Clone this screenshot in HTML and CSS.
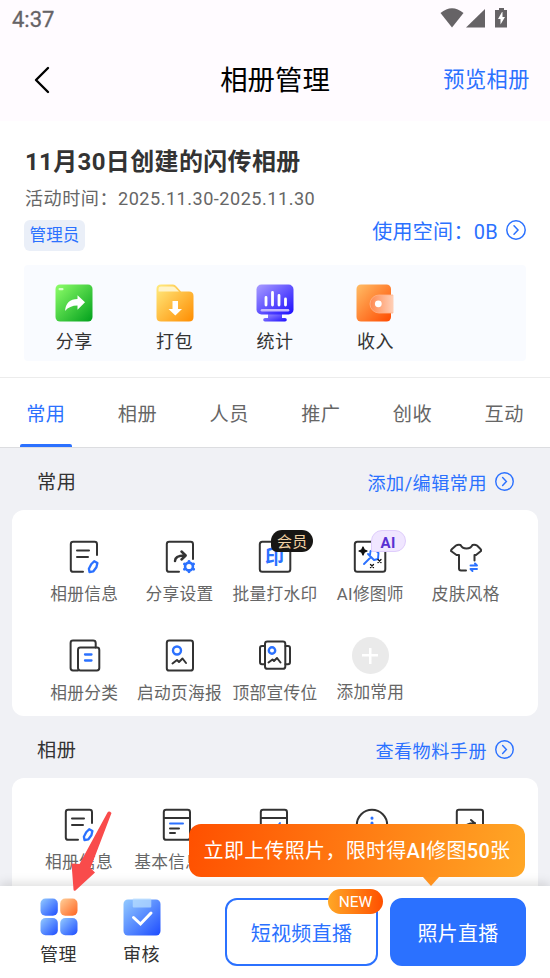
FILE: index.html
```html
<!DOCTYPE html>
<html lang="zh-CN">
<head>
<meta charset="utf-8">
<title>相册管理</title>
<link rel="stylesheet" href="styles.css">
</head>
<body>
<svg class="defs" width="0" height="0" aria-hidden="true">
  <defs>
    <linearGradient id="green" x1="0" y1="0" x2="1" y2="1"><stop offset="0" stop-color="#8fff69"/><stop offset="1" stop-color="#00a01c"/></linearGradient>
    <linearGradient id="yellow" x1="0" y1="0" x2="1" y2="1"><stop offset="0" stop-color="#ffec80"/><stop offset="1" stop-color="#ff8c00"/></linearGradient>
    <linearGradient id="violet" x1="0" y1="0" x2="1" y2="1"><stop offset="0" stop-color="#aa9dff"/><stop offset="1" stop-color="#1c0dff"/></linearGradient>
    <linearGradient id="orange" x1="0" y1="0" x2="1" y2="1"><stop offset="0" stop-color="#ffbd66"/><stop offset="1" stop-color="#ff4a00"/></linearGradient>
    <linearGradient id="peach" x1="0" y1="0" x2="1" y2="1"><stop offset="0" stop-color="#ffd09a"/><stop offset="1" stop-color="#ff6420"/></linearGradient>
    <linearGradient id="blue" x1="0" y1="0" x2="1" y2="1"><stop offset="0" stop-color="#94cbff"/><stop offset="1" stop-color="#1d4cff"/></linearGradient>
    <linearGradient id="clasp" x1="0" y1="0" x2="1" y2="0"><stop offset="0" stop-color="#ff8a50"/><stop offset="1" stop-color="#ffd0b8"/></linearGradient>
    <symbol id="chev" viewBox="0 0 20 20"><circle cx="10" cy="10" r="9.2"/><path d="M8 5.8 12 10 8 14.2"/></symbol>
    <symbol id="doc" viewBox="0 0 38 38">
      <path d="M32 17V6.2q0-2.4-2.4-2.4H8.2q-2.4 0-2.4 2.4v25.2q0 2.4 2.4 2.4H18M12 12.500h12M12 19h11"/>
      <path class="b" d="m29.200 23.200 3.200 1.800-1 4.300-3 4-3.900.8-.6-3.400 2.300-4.500z" stroke-width="2.300"/>
    </symbol>
  </defs>
</svg>

<div class="screen">
  <header class="top">
    <div class="status">
      <span class="time">4:37</span>
      <svg class="signals" width="70" height="22" viewBox="0 0 70 22" fill="#666366">
        <path d="M.5 6Q12-3.500 23.500 6L12 20.500z"/><path d="M26 20.500 45 2v18.500z"/>
        <path d="M59 1h5v2h3v17.500H55V3h4z"/><path d="m62 5-4 7h2.500v5.500L65 10h-2.500V5z" fill="#fff"/>
      </svg>
    </div>
    <div class="navbar">
      <svg class="back" width="18" height="30" viewBox="0 0 18 30"><path d="M15 3 3 15l12 12"/></svg>
      <h1>相册管理</h1>
      <a class="preview">预览相册</a>
    </div>
  </header>

  <section class="summary">
    <h2>11月30日创建的闪传相册</h2>
    <p class="date">活动时间：2025.11.30-2025.11.30</p>
    <div class="meta">
      <span class="role">管理员</span>
      <a class="space">使用空间：0B <svg width="20" height="20"><use href="#chev"/></svg></a>
    </div>
    <div class="quick">
      <div class="quick-item">
        <svg width="38" height="38" viewBox="0 0 38 38"><rect x=".5" y=".5" width="37" height="37" rx="4.500" fill="url(#green)"/><rect x="3.500" y="4" width="5" height="2.300" rx="1.100" fill="#d6ffc9"/><path d="M10 27q1-12 12.500-12v-3.700l7.500 7-7.500 7.500V21.500q-8 0-12.500 5.500z" fill="#fff"/></svg>
        <span>分享</span>
      </div>
      <div class="quick-item">
        <svg width="38" height="38" viewBox="0 0 38 38"><path d="M.5 5q0-4.500 4.500-4.500h12q2 0 3.500 2l4.500 5h8q4.500 0 4.500 4.500v21q0 4.500-4.500 4.500H5q-4.500 0-4.500-4.500z" fill="url(#yellow)"/><path d="M2.500 7.500V4.800Q2.500 2.500 5 2.500h11.500q1.500 0 2.500 1l4 4z" fill="#fff3c8"/><path d="M16.500 17h5.500v8h4l-6.700 6.500L12.500 25h4z" fill="#fff"/></svg>
        <span>打包</span>
      </div>
      <div class="quick-item">
        <svg width="38" height="38" viewBox="0 0 38 38"><path d="M12 29h14v5h3a1.800 1.800 0 0 1 0 3.600H9A1.800 1.800 0 0 1 9 34h3z" fill="url(#violet)"/><rect x=".5" y=".5" width="37" height="30" rx="5" fill="url(#violet)"/><path d="M10 13.500v7.500M16.500 8.500V21M23 11.500V21M29.500 15v6" stroke="#fff" stroke-width="2.800" stroke-linecap="round"/><path d="M6 26.300h26" stroke="#c4b8ff" stroke-width="2.600" stroke-linecap="round"/></svg>
        <span>统计</span>
      </div>
      <div class="quick-item">
        <svg width="38" height="38" viewBox="0 0 38 38"><rect x=".5" y=".5" width="34.500" height="37" rx="4.500" fill="url(#orange)"/><path d="M37.500 11H23a8.800 8.800 0 0 0 0 18h14.500z" fill="url(#clasp)"/><path d="M37 11H23a8.800 8.800 0 0 0 0 18h14" fill="none" stroke="#ffb48a" stroke-width=".8"/><circle cx="22.300" cy="19.800" r="3.400" fill="#fff"/></svg>
        <span>收入</span>
      </div>
    </div>
  </section>

  <nav class="tabs">
    <a class="tab active">常用</a><a class="tab">相册</a><a class="tab">人员</a><a class="tab">推广</a><a class="tab">创收</a><a class="tab">互动</a>
  </nav>

  <main class="content">
    <div class="section-head"><h3>常用</h3><a>添加/编辑常用<svg width="19" height="19"><use href="#chev"/></svg></a></div>
    <div class="card common">
      <div class="item"><svg class="ic" viewBox="0 0 38 38"><use href="#doc"/></svg><span>相册信息</span></div>
      <div class="item">
        <svg class="ic" viewBox="0 0 38 38"><path d="M32 21V6.200q0-2.400-2.400-2.400H8.200q-2.400 0-2.400 2.400v25.200q0 2.400 2.400 2.400H18"/><path d="M14 23q0-5.500 9.500-5.500M20.500 13.500l4.200 4-4.200 4" stroke-width="2.500"/><circle class="b" cx="28" cy="28.500" r="3.900" stroke-width="2.600"/><path class="b" d="M28 23.300v.3M28 33.500v.3M23.400 26l.3.200M32.400 31l.3.200M32.600 26l-.3.200M23.700 31l-.3.200" stroke-width="2.800"/></svg>
        <span>分享设置</span>
      </div>
      <div class="item">
        <svg class="ic" viewBox="0 0 38 38"><rect x="3.800" y="3.800" width="30.500" height="30" rx="2.500"/><text class="seal" x="18.500" y="25.500" text-anchor="middle">印</text></svg>
        <b class="badge vip">会员</b><span>批量打水印</span>
      </div>
      <div class="item">
        <svg class="ic" viewBox="0 0 38 38"><rect x="3.800" y="3.800" width="30.500" height="30" rx="2.500"/><path class="b" d="m13 26 6.500-6.500M17 16l6 6 4-1 .500-6-4-4-4 2-.5 4" stroke-width="1.900"/><path class="k" d="m12 9 1.200 2.800L16 13l-2.800 1.200L12 17l-1.200-2.800L8 13l2.800-1.200zM27 21.500l3 3m0-3-3 3M19.500 26.500l3 3m0-3-3 3"/></svg>
        <b class="badge ai">AI</b><span>AI修图师</span>
      </div>
      <div class="item">
        <svg class="ic" viewBox="0 0 38 38"><path d="M19 32.500h-5q-2 0-2-2V17H9.500L4 13q0-1 1-2l4-3.500q1.500-1 4.500-.6 1.500 3.600 6 3.600t6-3.600q3-.4 4.500.6l3.500 3.500q1 1 .500 2L29 17h-1.500v5.500"/><path class="b" d="M23.500 27.500H30l-2-2M30 31h-6.500l2 2" stroke-width="1.900"/></svg>
        <span>皮肤风格</span>
      </div>
      <div class="item">
        <svg class="ic" viewBox="0 0 38 38"><path d="M13 33.500H8q-2.400 0-2.400-2.400V6q0-2.400 2.400-2.400h20Q30.700 3.600 30.700 6v4.500"/><rect x="13" y="10.500" width="21.300" height="23" rx="2.400"/><path class="b" d="M20 17.500h6.500M20 23.500h6.500" stroke-width="2.300"/></svg>
        <span>相册分类</span>
      </div>
      <div class="item">
        <svg class="ic" viewBox="0 0 38 38"><rect x="5.800" y="3.600" width="26.200" height="30" rx="2.400"/><circle class="b" cx="16" cy="13.500" r="4" stroke-width="2.400"/><path d="m11.500 26.500 4.500-3.500 2 2 3.500-3.500 3.500 4.500"/></svg>
        <span>启动页海报</span>
      </div>
      <div class="item">
        <svg class="ic" viewBox="0 0 38 38"><rect x="9" y="4.500" width="20.300" height="27.300" rx="2.400"/><path d="M8.500 9H6Q4 9 4 11v14q0 2.300 2 2.300h2.500M29.500 9H32q2 0 2 2v14q0 2.300-2 2.300h-2.500"/><circle class="b" cx="16" cy="13.500" r="3.200" stroke-width="2.400"/><path d="m12.500 25.500 4-3 1.500 1.500 3-3 3.500 4.500"/></svg>
        <span>顶部宣传位</span>
      </div>
      <div class="item add"><i class="plus"></i><span>添加常用</span></div>
    </div>

    <div class="section-head second"><h3>相册</h3><a>查看物料手册<svg width="19" height="19"><use href="#chev"/></svg></a></div>
    <div class="card album">
      <div class="item"><svg class="ic" viewBox="0 0 38 38"><use href="#doc"/></svg><span>相册信息</span></div>
      <div class="item"><svg class="ic" viewBox="0 0 38 38"><rect x="5.800" y="3.800" width="26.200" height="30" rx="2.400"/><path d="M6 12h26M12 22.500h9M12 27h5"/><path class="b" d="M12 17.500h13"/></svg><span>基本信息页</span></div>
      <div class="item"><svg class="ic" viewBox="0 0 38 38"><rect x="5.800" y="3.800" width="26.200" height="30" rx="2.400"/><path d="M6 12h26"/><path class="b" d="m13 24 5 3 7-10"/></svg></div>
      <div class="item"><svg class="ic" viewBox="0 0 38 38"><circle cx="19" cy="19" r="15.200"/><path class="b" d="M19 12v.2M19 17v9" stroke-width="3"/></svg></div>
      <div class="item"><svg class="ic" viewBox="0 0 38 38"><rect x="5.800" y="3.800" width="26.200" height="30" rx="2"/><path d="M14 23q0-6 10-6M20 14l4 3.500-4 4"/></svg></div>
    </div>
  </main>

  <footer class="bottom">
    <div class="dock">
      <svg width="38" height="38" viewBox="0 0 38 38"><rect x=".5" y=".5" width="17.300" height="17.300" rx="5" fill="url(#blue)"/><rect x="20.200" y=".5" width="17.300" height="17.300" rx="5" fill="url(#peach)"/><rect x=".5" y="20" width="17.300" height="17.300" rx="5" fill="url(#blue)"/><rect x="20.200" y="20" width="17.300" height="17.300" rx="5" fill="url(#blue)"/></svg>
      <span>管理</span>
    </div>
    <div class="dock">
      <svg width="38" height="38" viewBox="0 0 38 38"><rect x=".5" y="1.500" width="37" height="36" rx="4.500" fill="url(#blue)"/><rect x="9.700" y=".5" width="18.600" height="9" rx="1" fill="#b7dcff" opacity=".75"/><path d="m10.500 19.500 7 6.500 10.500-11" fill="none" stroke="#fff" stroke-width="3" stroke-linecap="round"/></svg>
      <span>审核</span>
    </div>
    <button class="btn outline">短视频直播<b class="new">NEW</b></button>
    <button class="btn solid">照片直播</button>
    <div class="tip">立即上传照片，限时得<em>AI</em>修图<em>50</em>张</div>
  </footer>

  <svg class="pointer" width="42" height="82" viewBox="70 810 42 82"><path d="M107.500 812.500q1.500-2 4 .5L90.500 868l4.500 4.500-19.500 18q-1.800 1-2-1L71.500 863.500l8 .5z" fill="#f94b4b"/></svg>
</div>
</body>
</html>
```

FILE: styles.css
```css
* { box-sizing: border-box; }
body { margin: 0; font-family: Roboto, "Noto Sans CJK SC", sans-serif; letter-spacing: .5px; color: #333; }
h1, h2, h3, p { margin: 0; font-weight: 400; }
.defs { position: absolute; }
.screen { position: relative; width: 550px; height: 978px; overflow: hidden; display: flex; flex-direction: column; background: #fff; }

.top { height: 121px; flex: none; background: #fffbff; }
.status { height: 38px; display: flex; justify-content: space-between; padding: 7px 40px 0 12px; }
.time { font-size: 22px; line-height: 25px; font-weight: 400; -webkit-text-stroke: .3px #666366; color: #666366; letter-spacing: 0; }
.navbar { height: 83px; display: grid; grid-template-columns: 1fr auto 1fr; align-items: center; padding: 0 20px 0 33px; }
.back { fill: none; stroke: #000; stroke-width: 2.4; stroke-linecap: round; stroke-linejoin: round; }
.navbar h1 { font-size: 27.400px; letter-spacing: 0; color: #000; margin: -4px 0 0 -13px; }
.preview { justify-self: end; margin-top: -4px; font-size: 21.200px; color: #2b71ff; }

.summary { height: 256px; flex: none; padding: 25px 24px 0 24px; }
.summary h2 { font-size: 24px; line-height: 32px; font-weight: 700; letter-spacing: .35px; padding-left: 1px; }
.date { font-size: 18.100px; line-height: 24px; margin-top: 9px; color: #666; padding-left: 1px; }
.meta { display: flex; justify-content: space-between; margin-top: 9px; height: 31px; }
.role { width: 61px; height: 31px; border-radius: 6px; background: #eaeff8; color: #2b71ff; font-size: 16.500px; line-height: 31px; text-align: center; letter-spacing: .2px; }
.space { display: flex; align-items: center; height: 20px; gap: 8px; font-size: 20px; letter-spacing: .3px; color: #2b71ff; }
.space svg, .section-head svg { fill: none; stroke: #2b71ff; stroke-width: 1.500; stroke-linecap: round; }
.quick { display: grid; grid-template-columns: repeat(5, 1fr); height: 96px; margin-top: 14px; padding-top: 19px; background: #f9fbff; border-radius: 4px; }
.quick-item { display: flex; flex-direction: column; align-items: center; font-size: 18px; }
.quick-item span { line-height: 24px; margin-top: 8px; }

.tabs { height: 71px; flex: none; display: flex; border-top: 1px solid #ececec; border-bottom: 1px solid #dcdde0; }
.tab { flex: 1; text-align: center; font-size: 19.200px; line-height: 74px; color: #666; position: relative; }
.active { color: #2b71ff; }
.active::after { content: ""; position: absolute; left: 20px; top: 66px; width: 52px; height: 3px; background: #2b71ff; border-radius: 2px 2px 0 0; }

.content { flex: 1; min-height: 0; background: #f0f1f5; padding: 0 12px; }
.section-head { height: 62px; display: flex; justify-content: space-between; align-items: center; padding: 5px 24px 0 25px; }
.section-head.second { padding-top: 5px; }
.section-head h3 { font-size: 19.200px; margin-top: -1px; }
.section-head a { display: flex; align-items: center; gap: 8px; color: #2b71ff; font-size: 18.100px; }
.card { background: #fff; border-radius: 12px; display: grid; }
.common { height: 206px; grid-template-columns: repeat(5, 95.400px); grid-auto-rows: 99px; padding: 28px 0 0 24.500px; }
.album { height: 220px; grid-template-columns: repeat(5, 97.800px); padding: 28px 0 0 18px; }
.item { display: flex; flex-direction: column; align-items: center; position: relative; color: #666; font-size: 16.700px; letter-spacing: .3px; white-space: nowrap; }
.item > span { line-height: 22px; margin-top: 8px; }
.ic { width: 38px; height: 38px; fill: none; stroke: #333; stroke-width: 2; stroke-linejoin: round; stroke-linecap: round; }
.ic .b, .b { stroke: #2b71ff; }
.ic .k { fill: #111; stroke: #111; stroke-width: 1.300; }
.ic .seal { fill: #2b71ff; stroke: none; font-size: 19px; font-weight: 700; letter-spacing: 0; }
.badge { position: absolute; top: -8px; height: 22px; line-height: 24px; text-align: center; letter-spacing: .2px; }
.vip { left: 44px; width: 42px; background: #171614; color: #f1d1a4; border-radius: 11px 11px 11px 6px; font-size: 15px; font-weight: 400; }
.ai { left: 48px; width: 35px; background: #f0e6ff; border: 1px solid #dfcdfc; color: #5930d2; border-radius: 11px 11px 11px 2px; font-size: 15px; font-weight: 700; letter-spacing: .5px; }
.plus { width: 37px; height: 37px; border-radius: 50%; background: linear-gradient(#fff, #fff) center / 16px 2.500px no-repeat, linear-gradient(#fff, #fff) center / 2.500px 16px no-repeat, #eaeaea; }

.bottom { position: relative; height: 92px; flex: none; display: flex; padding: 12px 24px 0 17px; background: #fff; box-shadow: 0 -3px 10px rgba(0, 0, 0, .13); }
.dock { width: 83px; display: flex; flex-direction: column; align-items: center; font-size: 18px; }
.dock span { line-height: 24px; margin-top: 7px; }
.dock svg { margin-top: -.5px; }
.btn { position: relative; height: 68px; font: 20px/65px Roboto, "Noto Sans CJK SC", sans-serif; letter-spacing: .3px; border: 2px solid #2b71ff; border-radius: 12px; padding: 2px 0 0; text-align: center; }
.outline { width: 153px; margin-left: 42px; color: #2b71ff; background: #fff; }
.solid { width: 136px; margin-left: 12px; flex: none; color: #fff; background: #2b71ff; }
.new { position: absolute; top: -11px; right: -7px; width: 55px; height: 25px; border-radius: 13px; background: linear-gradient(90deg, #ffa726, #ff5000); color: #fff; font-size: 15.500px; font-weight: 400; line-height: 27px; letter-spacing: 0; }
.tip { position: absolute; right: 25px; top: -62px; width: 336px; height: 53px; border-radius: 12px; background: linear-gradient(100deg, #ff5000, #ffa726); color: #fff; font-size: 20px; line-height: 55px; text-align: center; white-space: nowrap; letter-spacing: .3px; }
.tip em { font-style: normal; font-weight: 500; }
.tip::after { content: ""; position: absolute; left: 234px; top: 53px; border: 8px solid transparent; border-top: 9px solid #ff921f; border-bottom: 0; }
.pointer { position: absolute; left: 70px; top: 810px; }
```
